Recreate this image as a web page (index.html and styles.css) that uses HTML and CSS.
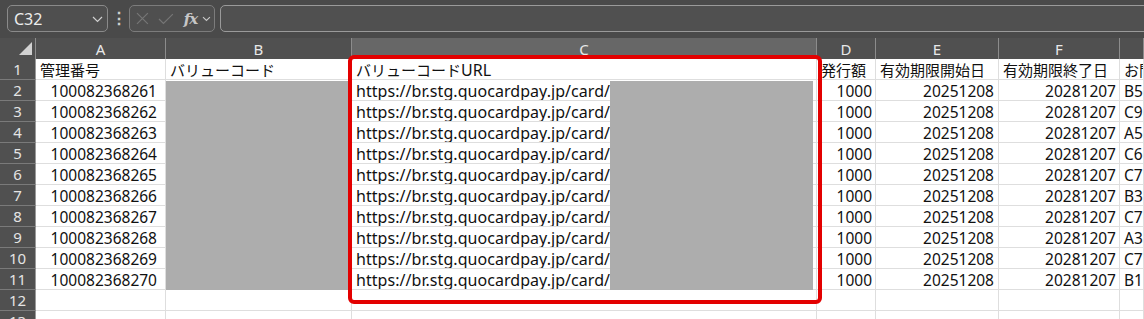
FILE: index.html
```html
<!DOCTYPE html>
<html lang="ja">
<head>
    <meta charset="UTF-8">
    <title>バリューコード一覧</title>
    <link rel="stylesheet" href="styles.css">
</head>
<body>
    <div class="formula-bar">
        <div class="name-box">
            <span>C32</span>
            <svg class="chev" width="11" height="7" viewBox="0 0 11 7"><path d="M1 1 L5.5 5.5 L10 1" fill="none" stroke="#d0d0d0" stroke-width="1.2"/></svg>
        </div>
        <div class="kebab">&#8942;</div>
        <div class="fn-box">
            <svg width="13" height="13" viewBox="0 0 13 13"><path d="M1 1 L12 12 M12 1 L1 12" stroke="#767676" stroke-width="1.2"/></svg>
            <svg width="16" height="12" viewBox="0 0 16 12"><path d="M1 6 L5.5 10.5 L15 1" fill="none" stroke="#767676" stroke-width="1.2"/></svg>
            <span class="fx">fx</span>
            <svg width="9" height="6" viewBox="0 0 9 6"><path d="M1 1 L4.5 4.5 L8 1" fill="none" stroke="#c8c8c8" stroke-width="1.1"/></svg>
        </div>
        <div class="formula-input"></div>
    </div>

    <div class="sheet">
        <div class="grid">
            <div class="corner"><svg width="14" height="14" viewBox="0 0 14 14"><path d="M0 13 L13 13 L13 0 Z" fill="#d2d2d2"/></svg></div>
            <div class="colhead">A</div>
            <div class="colhead">B</div>
            <div class="colhead selected">C</div>
            <div class="colhead">D</div>
            <div class="colhead">E</div>
            <div class="colhead">F</div>
            <div class="colhead"></div>

            <div class="rowhead">1</div>
            <div class="cell">管理番号</div>
            <div class="cell">バリューコード</div>
            <div class="cell">バリューコード<span class="url">URL</span></div>
            <div class="cell">発行額</div>
            <div class="cell">有効期限開始日</div>
            <div class="cell">有効期限終了日</div>
            <div class="cell">お問い合わせ番号</div>

            <div class="rowhead">2</div>
            <div class="cell num col-a">100082368261</div>
            <div class="cell"></div>
            <div class="cell url">https://br.stg.quocardpay.jp/card/</div>
            <div class="cell num">1000</div>
            <div class="cell num col-e">20251208</div>
            <div class="cell num">20281207</div>
            <div class="cell lat">B55K2QH7M</div>

            <div class="rowhead">3</div>
            <div class="cell num col-a">100082368262</div>
            <div class="cell"></div>
            <div class="cell url">https://br.stg.quocardpay.jp/card/</div>
            <div class="cell num">1000</div>
            <div class="cell num col-e">20251208</div>
            <div class="cell num">20281207</div>
            <div class="cell lat">C98F4TR2A</div>

            <div class="rowhead">4</div>
            <div class="cell num col-a">100082368263</div>
            <div class="cell"></div>
            <div class="cell url">https://br.stg.quocardpay.jp/card/</div>
            <div class="cell num">1000</div>
            <div class="cell num col-e">20251208</div>
            <div class="cell num">20281207</div>
            <div class="cell lat">A58W1ZK9D</div>

            <div class="rowhead">5</div>
            <div class="cell num col-a">100082368264</div>
            <div class="cell"></div>
            <div class="cell url">https://br.stg.quocardpay.jp/card/</div>
            <div class="cell num">1000</div>
            <div class="cell num col-e">20251208</div>
            <div class="cell num">20281207</div>
            <div class="cell lat">C60P7LN3E</div>

            <div class="rowhead">6</div>
            <div class="cell num col-a">100082368265</div>
            <div class="cell"></div>
            <div class="cell url">https://br.stg.quocardpay.jp/card/</div>
            <div class="cell num">1000</div>
            <div class="cell num col-e">20251208</div>
            <div class="cell num">20281207</div>
            <div class="cell lat">C79H3VB8S</div>

            <div class="rowhead">7</div>
            <div class="cell num col-a">100082368266</div>
            <div class="cell"></div>
            <div class="cell url">https://br.stg.quocardpay.jp/card/</div>
            <div class="cell num">1000</div>
            <div class="cell num col-e">20251208</div>
            <div class="cell num">20281207</div>
            <div class="cell lat">B33N6XC1F</div>

            <div class="rowhead">8</div>
            <div class="cell num col-a">100082368267</div>
            <div class="cell"></div>
            <div class="cell url">https://br.stg.quocardpay.jp/card/</div>
            <div class="cell num">1000</div>
            <div class="cell num col-e">20251208</div>
            <div class="cell num">20281207</div>
            <div class="cell lat">C70J9RD4G</div>

            <div class="rowhead">9</div>
            <div class="cell num col-a">100082368268</div>
            <div class="cell"></div>
            <div class="cell url">https://br.stg.quocardpay.jp/card/</div>
            <div class="cell num">1000</div>
            <div class="cell num col-e">20251208</div>
            <div class="cell num">20281207</div>
            <div class="cell lat">A33T2MY5H</div>

            <div class="rowhead">10</div>
            <div class="cell num col-a">100082368269</div>
            <div class="cell"></div>
            <div class="cell url">https://br.stg.quocardpay.jp/card/</div>
            <div class="cell num">1000</div>
            <div class="cell num col-e">20251208</div>
            <div class="cell num">20281207</div>
            <div class="cell lat">C77E8QS6J</div>

            <div class="rowhead">11</div>
            <div class="cell num col-a">100082368270</div>
            <div class="cell"></div>
            <div class="cell url">https://br.stg.quocardpay.jp/card/</div>
            <div class="cell num">1000</div>
            <div class="cell num col-e">20251208</div>
            <div class="cell num">20281207</div>
            <div class="cell lat">B19U4GW7K</div>

            <div class="rowhead">12</div>
            <div class="cell"></div><div class="cell"></div><div class="cell"></div><div class="cell"></div>
            <div class="cell"></div><div class="cell"></div><div class="cell"></div>

            <div class="rowhead">13</div>
            <div class="cell"></div><div class="cell"></div><div class="cell"></div><div class="cell"></div>
            <div class="cell"></div><div class="cell"></div><div class="cell"></div>
        </div>

        <!-- redacted values -->
        <div class="mask mask-b"></div>
        <div class="mask mask-c"></div>
        <!-- highlight round column C -->
        <div class="highlight"></div>
    </div>
</body>
</html>
```

FILE: styles.css
```css
body {
    margin: 0;
    width: 1144px;
    height: 319px;
    overflow: hidden;
    background: #4a4a4a;
    font-family: "Noto Sans", "Noto Sans CJK JP", sans-serif;
}

/* formula bar */
.formula-bar {
    height: 38px;
    display: flex;
    align-items: flex-start;
    padding: 5px 0 0 7px;
    box-sizing: border-box;
    background: #4a4a4a;
}
.name-box {
    width: 101px;
    height: 27px;
    box-sizing: border-box;
    border: 1px solid #8a8a8a;
    border-radius: 5px;
    background: #4f4f4f;
    display: flex;
    align-items: center;
    justify-content: space-between;
    padding: 0 4px 0 6px;
    color: #ececec;
    font-size: 16px;
}
.name-box .chev {
    margin-top: 2px;
}
.kebab {
    width: 21px;
    height: 27px;
    line-height: 26px;
    text-align: center;
    color: #cfcfcf;
    font-size: 16px;
    font-weight: bold;
}
.fn-box {
    width: 86px;
    height: 27px;
    box-sizing: border-box;
    border: 1px solid #7c7c7c;
    border-radius: 5px;
    background: #4f4f4f;
    display: flex;
    align-items: center;
    gap: 9px;
    padding: 0 3px 0 6px;
}
.fn-box .fx {
    font-family: "DejaVu Serif", "Liberation Serif", serif;
    font-style: italic;
    font-weight: bold;
    font-size: 15px;
    color: #c6c6c6;
    margin-left: 1px;
    margin-right: -4px;
    letter-spacing: -1px;
}
.formula-input {
    flex: 1;
    height: 27px;
    margin-left: 5px;
    margin-right: -10px;
    box-sizing: border-box;
    border: 1px solid #9a9a9a;
    border-radius: 5px;
    background: #505050;
}

/* sheet */
.sheet {
    position: relative;
    height: 281px;
    overflow: hidden;
}
.grid {
    display: grid;
    grid-template-columns: 36px 130px 186px 465px 59px 123px 121px 1fr;
    grid-auto-rows: 21px;
    background: #fff;
    font-size: 15px;
}
.corner,
.colhead {
    background: #505050;
    border-right: 1px solid #8c8c8c;
    box-sizing: border-box;
    color: #e8e8e8;
    text-align: center;
    line-height: 22px;
    font-size: 15px;
}
.corner {
    padding: 4px 0 0 19px;
    text-align: left;
    line-height: 0;
}
.colhead.selected {
    background: #676767;
}
.rowhead {
    background: #505050;
    border-right: 1px solid #9a9a9a;
    border-bottom: 1px solid #7a7a7a;
    box-sizing: border-box;
    color: #e4e4e4;
    text-align: center;
    line-height: 21px;
}
.cell {
    border-right: 1px solid #dedede;
    border-bottom: 1px solid #dedede;
    box-sizing: border-box;
    padding: 1px 3px 0 4px;
    line-height: 20px;
    white-space: nowrap;
    overflow: hidden;
    color: #111;
}
.lat,
.num {
    font-size: 15.5px;
}
.url {
    font-size: 16px;
    letter-spacing: 0.05px;
}
.num {
    text-align: right;
}
.col-a {
    padding-right: 8px;
}
.col-e {
    padding-right: 4px;
}

.mask {
    position: absolute;
    top: 43px;
    height: 209px;
    background: #adadad;
}
.mask-b {
    left: 166px;
    width: 182px;
}
.mask-c {
    left: 610px;
    width: 203px;
}
.highlight {
    position: absolute;
    left: 348px;
    top: 17px;
    width: 474px;
    height: 249px;
    box-sizing: border-box;
    border: 4px solid #e30000;
    border-radius: 6px;
}
```
